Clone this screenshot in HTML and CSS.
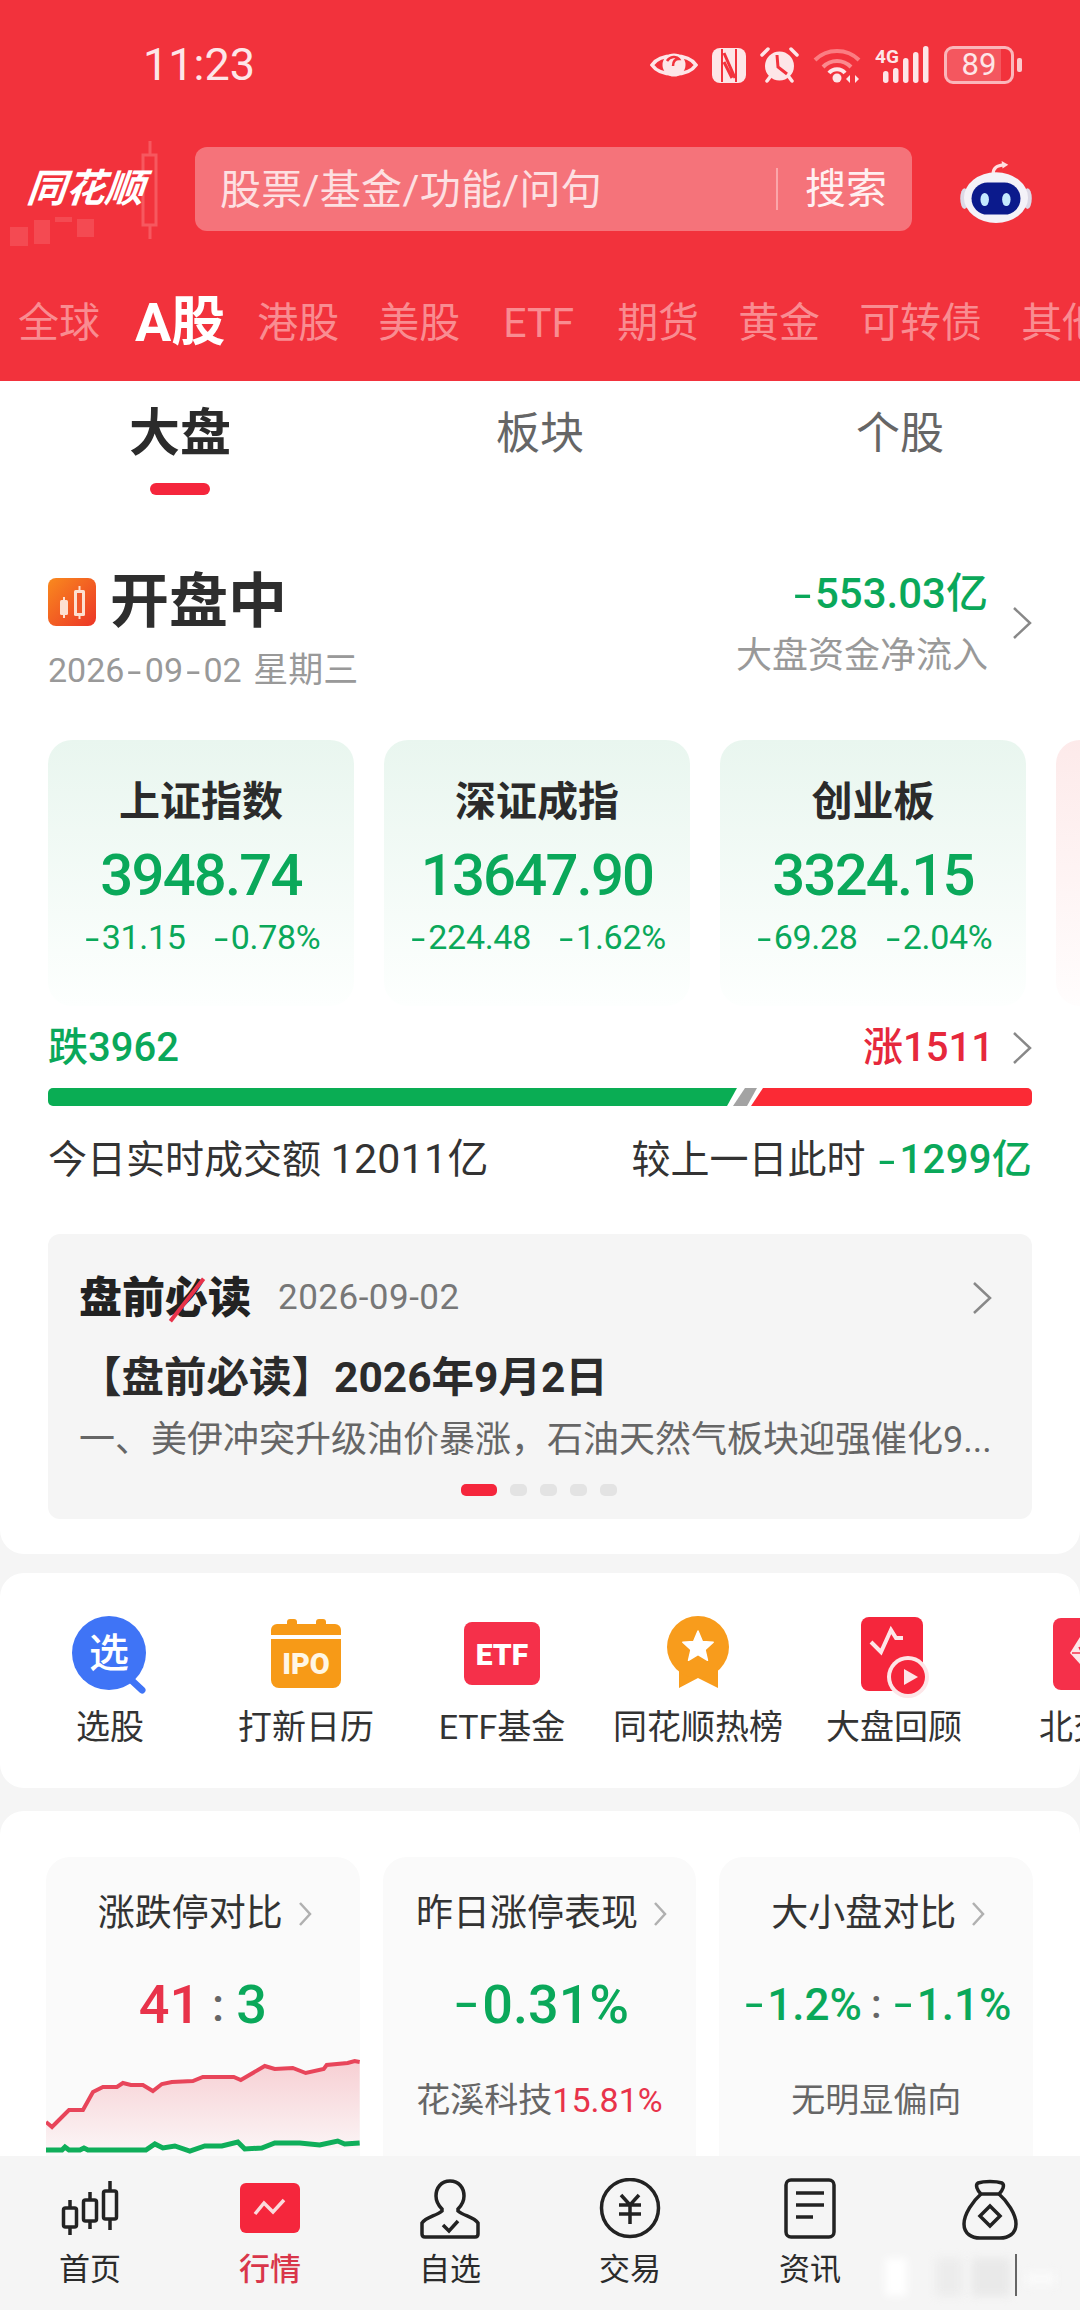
FILE: index.html
```html
<!DOCTYPE html>
<html lang="zh-CN">
<head>
<meta charset="utf-8">
<title>行情</title>
<link rel="stylesheet" href="styles.css">
</head>
<body>
<div class="page">
  <header class="header">
    <div class="status">
      <span class="time">11:23</span>
      <div class="status-icons">
        <svg class="si-eye" viewBox="0 0 48 32"><path d="M2 16C10 4 38 4 46 16C38 28 10 28 2 16Z" fill="none" stroke="#fde6e8" stroke-width="3.5"/><circle cx="24" cy="16" r="11.5" fill="#fde6e8"/><path d="M17 12C20 7 27 7 29 10C25 10 23 13 23 17" fill="none" stroke="#f2323c" stroke-width="2.5"/></svg>
        <svg class="si-nfc" viewBox="0 0 34 35"><rect width="34" height="35" rx="8" fill="#fde6e8"/><path d="M10 1V34M24 1V34" stroke="#f2323c" stroke-width="2"/><path d="M12 5L23 30M12 14L20 30" stroke="#f2323c" stroke-width="3"/></svg>
        <svg class="si-alarm" viewBox="0 0 39 38"><circle cx="19.500" cy="20" r="14.500" fill="#fde6e8"/><path d="M17 9L18 21L27 28" fill="none" stroke="#f2323c" stroke-width="3"/><path d="M2 9L8 3M37 9L31 3M7 35L10 31M32 35L29 31" stroke="#fde6e8" stroke-width="3.500" stroke-linecap="round"/></svg>
        <svg class="si-wifi" viewBox="0 0 48 36"><path d="M2 13C14 1 34 1 46 13" fill="none" stroke="#fb7d82" stroke-width="4"/><path d="M10 20C18 12 30 12 38 20" fill="none" stroke="#fb8a8e" stroke-width="4"/><path d="M16 26C20 21 28 21 32 26" fill="none" stroke="#fde6e8" stroke-width="4"/><circle cx="24" cy="31" r="4.500" fill="#fde6e8"/><path d="M37 28L33 32L37 36ZM42 28L46 32L42 36Z" fill="#fde6e8"/></svg>
        <svg class="si-signal" viewBox="0 0 55 38"><text class="si-4g" x="0" y="17">4G</text><g fill="#fde6e8"><rect x="8" y="25" width="5.500" height="12" rx="2.700"/><rect x="18" y="22" width="5.500" height="15" rx="2.700"/><rect x="28" y="12" width="5.500" height="25" rx="2.700"/><rect x="38" y="6" width="5.500" height="31" rx="2.700"/><rect x="48" y="0" width="5.500" height="37" rx="2.700"/></g></svg>
        <div class="battery"><div class="battery-body"><span class="battery-fill"></span><span class="battery-num">89</span></div><span class="battery-nub"></span></div>
      </div>
    </div>
    <div class="search-row">
      <div class="logo">
        <svg class="logo-bg" viewBox="0 0 170 110"><g fill="none" stroke="#f6585f" stroke-width="3"><rect x="143" y="22" width="13" height="70"/><path d="M150 8V22M150 92V106"/></g><g fill="#f44a52"><rect x="10" y="94" width="18" height="19"/><rect x="34" y="87" width="16" height="24"/><rect x="55" y="84" width="17" height="5"/><rect x="77" y="86" width="17" height="18"/></g></svg>
        <span class="logo-text">同花顺</span>
      </div>
      <div class="search">
        <span class="search-hint">股票/基金/功能/问句</span>
        <span class="search-btn">搜索</span>
      </div>
      <svg class="robot" viewBox="0 0 76 68"><path d="M35 15C35 8 39 6 47 5" fill="none" stroke="#ffdfe1" stroke-width="3.500"/><path d="M44 1L51 5L45 9Z" fill="#ffdfe1"/><ellipse cx="4.500" cy="41" rx="4.500" ry="11" fill="#dcd9e6"/><ellipse cx="71.500" cy="41" rx="4.500" ry="11" fill="#dcd9e6"/><ellipse cx="38" cy="40" rx="34" ry="27" fill="#f4f2f8"/><rect x="12" y="24" width="52" height="34" rx="17" fill="#0b1a8c"/><ellipse cx="26" cy="42" rx="4.500" ry="7" fill="#c4e9ff"/><ellipse cx="49" cy="42" rx="4.500" ry="7" fill="#c4e9ff"/></svg>
    </div>
    <nav class="market-tabs">
      <span class="mt">全球</span>
      <span class="mt mt-on">A股</span>
      <span class="mt">港股</span>
      <span class="mt">美股</span>
      <span class="mt mt-etf">ETF</span>
      <span class="mt">期货</span>
      <span class="mt">黄金</span>
      <span class="mt">可转债</span>
      <span class="mt">其他</span>
    </nav>
  </header>

  <main class="content">
    <section class="panel panel-main">
      <div class="subtabs">
        <div class="subtab subtab-on">大盘<i class="subtab-line"></i></div>
        <div class="subtab">板块</div>
        <div class="subtab">个股</div>
      </div>

      <div class="overview">
        <div class="overview-left">
          <div class="state">
            <svg class="state-icon" viewBox="0 0 48 48"><defs><linearGradient id="og" x1="0" y1="0" x2="1" y2="1"><stop offset="0" stop-color="#f98a1e"/><stop offset="1" stop-color="#ec3527"/></linearGradient></defs><rect width="48" height="48" rx="8" fill="url(#og)"/><g fill="#fde0d0"><rect x="12" y="22" width="8" height="15" rx="1.500"/><rect x="15" y="19" width="2" height="21"/><rect x="26" y="12" width="11" height="26" rx="1.500"/><rect x="30.500" y="8" width="2" height="33"/></g><rect x="29" y="15" width="5" height="20" fill="#f0592a"/></svg>
            <span class="state-text">开盘中</span>
          </div>
          <div class="state-date">2026<span class="dash">-</span>09<span class="dash">-</span>02 <span class="state-week">星期三</span></div>
        </div>
        <div class="overview-right">
          <div class="flow">
            <div class="flow-num up-green"><span class="dash">-</span>553.03亿</div>
            <div class="flow-label">大盘资金净流入</div>
          </div>
          <svg class="chev" viewBox="0 0 20 32"><path d="M2 1L18 16L2 31" fill="none" stroke="#888" stroke-width="2.500"/></svg>
        </div>
      </div>

      <div class="indices">
        <article class="index">
          <h3 class="index-name">上证指数</h3>
          <div class="index-val">3948.74</div>
          <div class="index-sub"><span><span class="dash">-</span>31.15</span><span><span class="dash">-</span>0.78%</span></div>
        </article>
        <article class="index">
          <h3 class="index-name">深证成指</h3>
          <div class="index-val">13647.90</div>
          <div class="index-sub"><span><span class="dash">-</span>224.48</span><span><span class="dash">-</span>1.62%</span></div>
        </article>
        <article class="index">
          <h3 class="index-name">创业板</h3>
          <div class="index-val">3324.15</div>
          <div class="index-sub"><span><span class="dash">-</span>69.28</span><span><span class="dash">-</span>2.04%</span></div>
        </article>
        <article class="index index-red"></article>
      </div>

      <div class="breadth">
        <span class="breadth-down">跌3962</span>
        <div class="breadth-right">
          <span class="breadth-up">涨1511</span>
          <svg class="chev" viewBox="0 0 20 32"><path d="M2 1L18 16L2 31" fill="none" stroke="#888" stroke-width="2.500"/></svg>
        </div>
      </div>
      <svg class="bar" viewBox="0 0 984 18"><path d="M5 0H689L679 18H5A5 5 0 0 1 0 13V5A5 5 0 0 1 5 0Z" fill="#0aad54"/><path d="M697 0H709L699 18H685Z" fill="#a3a3a3"/><path d="M715 0H979A5 5 0 0 1 984 5V13A5 5 0 0 1 979 18H703Z" fill="#fb2a35"/></svg>
      <div class="volume">
        <span class="volume-item">今日实时成交额 <b class="volume-num">12011亿</b></span>
        <span class="volume-item">较上一日此时 <b class="volume-num volume-delta up-green"><span class="dash">-</span>1299亿</b></span>
      </div>

      <div class="brief">
        <div class="brief-head">
          <span class="brief-logo">盘前<span class="brief-bi">必</span>读</span>
          <span class="brief-date">2026-09-02</span>
          <svg class="chev brief-chev" viewBox="0 0 20 32"><path d="M2 1L18 16L2 31" fill="none" stroke="#888" stroke-width="2.500"/></svg>
        </div>
        <div class="brief-title">【盘前必读】2026年9月2日</div>
        <div class="brief-desc">一、美伊冲突升级油价暴涨&#65292;石油天然气板块迎强催化9...</div>
        <div class="dots"><i class="dot dot-on"></i><i class="dot"></i><i class="dot"></i><i class="dot"></i><i class="dot"></i></div>
      </div>
    </section>

    <section class="panel panel-tools">
      <div class="tool">
        <svg class="tool-icon" viewBox="0 0 80 80"><path d="M58 62L72 75" stroke="#3f74f6" stroke-width="7" stroke-linecap="round"/><circle cx="39" cy="38" r="37" fill="#3f74f6"/><text class="ti-cn" x="39" y="52">选</text></svg>
        <span class="tool-name">选股</span>
      </div>
      <div class="tool">
        <svg class="tool-icon" viewBox="0 0 80 80"><g fill="#f79a17"><rect x="21" y="4" width="10" height="8" rx="3"/><rect x="50" y="4" width="10" height="8" rx="3"/><path d="M5 20V15A6 6 0 0 1 11 9H69A6 6 0 0 1 75 15V20Z"/><path d="M5 24H75V65A8 8 0 0 1 67 73H13A8 8 0 0 1 5 65Z"/></g><text class="ti-en ti-ipo" x="40" y="59">IPO</text></svg>
        <span class="tool-name">打新日历</span>
      </div>
      <div class="tool">
        <svg class="tool-icon" viewBox="0 0 80 80"><rect x="2" y="7" width="76" height="63" rx="8" fill="#f5304a"/><text class="ti-en ti-etf" x="40" y="50">ETF</text></svg>
        <span class="tool-name">ETF基金</span>
      </div>
      <div class="tool">
        <svg class="tool-icon" viewBox="0 0 80 80"><path d="M21 50H60V73L40 63L21 73Z" fill="#f89c1c"/><circle cx="40" cy="32" r="31" fill="#f89c1c"/><path d="M40 16L44.400 26.500L55.200 27.300L47 34.600L49.500 45.300L40 39.500L30.500 45.300L33 34.600L24.800 27.300L35.600 26.500Z" fill="#fff" stroke="#fff" stroke-width="1.500" stroke-linejoin="round"/></svg>
        <span class="tool-name">同花顺热榜</span>
      </div>
      <div class="tool">
        <svg class="tool-icon" viewBox="0 0 80 80"><rect x="7" y="2" width="62" height="74" rx="8" fill="#f5263c"/><path d="M17 27L27 37L37 15L42 23H49" fill="none" stroke="#fde6e8" stroke-width="4"/><circle cx="54" cy="62" r="21" fill="#fde6e8"/><circle cx="54" cy="62" r="17" fill="#f5263c"/><path d="M50 54L64 62L50 70Z" fill="#fde6e8"/></svg>
        <span class="tool-name">大盘回顾</span>
      </div>
      <div class="tool">
        <svg class="tool-icon" viewBox="0 0 80 80"><rect x="3" y="3" width="74" height="72" rx="8" fill="#f5304a"/><path d="M20 38L30 22H50L60 38L40 60Z" fill="#fde6e8"/><path d="M22 38H32L29 32" fill="none" stroke="#f5304a" stroke-width="1.500"/></svg>
        <span class="tool-name">北交所</span>
      </div>
    </section>

    <section class="panel panel-stats">
      <article class="stat">
        <div class="stat-title">涨跌停对比<svg class="chev-s" viewBox="0 0 14 24"><path d="M2 1L12 12L2 23" fill="none" stroke="#b0b0b0" stroke-width="2.500"/></svg></div>
        <div class="stat-val stat-val-ratio"><span class="red">41</span><span class="colon">:</span><span class="up-green">3</span></div>
        <svg class="spark" viewBox="46 2050 314 110" preserveAspectRatio="none"><defs><linearGradient id="rg" x1="0" y1="0" x2="0" y2="1"><stop offset="0" stop-color="#f7cfd3"/><stop offset="1" stop-color="#fbf4f5"/></linearGradient></defs><path d="M46 2122L52 2127L62 2117L69 2110L83 2110L93 2092L103 2087L117 2087L123 2083L131 2085L143 2085L153 2091L162 2084L172 2082L193 2081L203 2077L234 2077L241 2080L265 2066L275 2069L293 2068L306 2073L324 2069L327 2065L348 2063L355 2061L360 2062V2148H46Z" fill="url(#rg)"/><path d="M46 2122L52 2127L62 2117L69 2110L83 2110L93 2092L103 2087L117 2087L123 2083L131 2085L143 2085L153 2091L162 2084L172 2082L193 2081L203 2077L234 2077L241 2080L265 2066L275 2069L293 2068L306 2073L324 2069L327 2065L348 2063L355 2061L360 2062" fill="none" stroke="#e8455a" stroke-width="4"/><path d="M46 2150H62L65 2147L69 2150L80 2150L84 2148L88 2150H146L155 2144L163 2148L175 2146L190 2151L205 2146L222 2146L238 2142L245 2149L262 2148L275 2143L300 2143L320 2145L338 2141L345 2144L360 2143" fill="none" stroke="#0fae5a" stroke-width="5"/></svg>
      </article>
      <article class="stat">
        <div class="stat-title">昨日涨停表现<svg class="chev-s" viewBox="0 0 14 24"><path d="M2 1L12 12L2 23" fill="none" stroke="#b0b0b0" stroke-width="2.500"/></svg></div>
        <div class="stat-val up-green"><span class="dash">-</span>0.31%</div>
        <div class="stat-sub">花溪科技<span class="red">15.81%</span></div>
      </article>
      <article class="stat">
        <div class="stat-title">大小盘对比<svg class="chev-s" viewBox="0 0 14 24"><path d="M2 1L12 12L2 23" fill="none" stroke="#b0b0b0" stroke-width="2.500"/></svg></div>
        <div class="stat-val stat-val-small up-green"><span class="dash">-</span>1.2%<span class="colon colon-small">:</span><span class="dash">-</span>1.1%</div>
        <div class="stat-sub">无明显偏向</div>
      </article>
    </section>
  </main>

  <nav class="tabbar">
    <div class="tab">
      <svg class="tab-icon" viewBox="0 0 64 64"><g fill="none" stroke="#222" stroke-width="3.500"><rect x="5.500" y="30" width="13" height="19" rx="2"/><path d="M12 22V30M12 49V57"/><rect x="25.500" y="22" width="13" height="21" rx="2"/><path d="M32 14V22M32 43V51"/><rect x="45.500" y="13" width="13" height="28" rx="2"/><path d="M52 3V13M52 41V52"/></g></svg>
      <span class="tab-name">首页</span>
    </div>
    <div class="tab tab-on">
      <svg class="tab-icon" viewBox="0 0 64 64"><rect x="2" y="5" width="60" height="50" rx="6" fill="#f5263c"/><path d="M17 36L26 25L35 34L46 22" fill="none" stroke="#fbd9dc" stroke-width="3.500"/></svg>
      <span class="tab-name">行情</span>
    </div>
    <div class="tab">
      <svg class="tab-icon" viewBox="0 0 64 64"><path d="M32 3C23 3 18 10 18 18C18 24 21 28 24 31V33C18 38 8 39 4 45V56C4 58 5 59 7 59H57C59 59 60 58 60 56V45C56 39 46 38 40 33V31C43 28 46 24 46 18C46 10 41 3 32 3Z" fill="none" stroke="#222" stroke-width="3.500"/><path d="M25 47L31 53L40 43" fill="none" stroke="#222" stroke-width="3.500"/></svg>
      <span class="tab-name">自选</span>
    </div>
    <div class="tab">
      <svg class="tab-icon" viewBox="0 0 64 64"><circle cx="32" cy="30" r="28.500" fill="none" stroke="#222" stroke-width="3.500"/><path d="M23 17L32 27L41 17M21 27H43M21 36H43M32 27V46" fill="none" stroke="#222" stroke-width="3.500"/></svg>
      <span class="tab-name">交易</span>
    </div>
    <div class="tab">
      <svg class="tab-icon" viewBox="0 0 64 64"><rect x="8" y="2" width="48" height="57" rx="5" fill="none" stroke="#222" stroke-width="3.500"/><path d="M18 15H46M18 27H46M18 39H35" fill="none" stroke="#222" stroke-width="3.500"/></svg>
      <span class="tab-name">资讯</span>
    </div>
    <div class="tab">
      <svg class="tab-icon" viewBox="0 0 64 64"><path d="M20 5C26 3 38 3 44 5C47 7 45 12 41 16H23C19 12 17 7 20 5Z" fill="none" stroke="#222" stroke-width="3.500"/><path d="M23 16C15 23 6 36 6 46C6 56 14 60 22 60H42C50 60 58 56 58 46C58 36 49 23 41 16" fill="none" stroke="#222" stroke-width="3.500"/><path d="M32 28L42 38L32 48L22 38Z" fill="none" stroke="#222" stroke-width="3.500"/></svg>
      <span class="tab-name tab-name-hidden"></span>
    </div>
    <div class="smear" aria-hidden="true"><i class="sm sm-a"></i><i class="sm sm-b"></i><i class="sm sm-c"></i><i class="sm sm-d"></i><i class="sm-line"></i></div>
  </nav>
</div>
</body>
</html>
```
FILE: styles.css
```css
* { box-sizing: border-box; }
html, body { margin: 0; padding: 0; }
body {
  width: 1080px;
  height: 2310px;
  overflow: hidden;
  font-family: Roboto, "Noto Sans CJK SC", sans-serif;
  color: #333;
  background: #f5f5f5;
}
.page { width: 1080px; height: 2310px; display: flex; flex-direction: column; }
.dash { display: inline-block; font-family: "Liberation Mono", Roboto, monospace; line-height: 0; transform: scaleX(1.3); }
.up-green { color: #0aa85a; }
.red { color: #e8334a; }

/* header */
.header { height: 381px; flex: none; background: #f2323c; overflow: hidden; }
.status { height: 130px; display: flex; align-items: center; justify-content: space-between; padding: 0 58px 0 143px; }
.time { font-size: 45px; color: #fde6e8; line-height: 50px; }
.status-icons { display: flex; align-items: center; gap: 14px; }
.si-eye { width: 48px; height: 32px; }
.si-nfc { width: 34px; height: 35px; }
.si-alarm { width: 39px; height: 38px; }
.si-wifi { width: 48px; height: 36px; }
.si-signal { width: 55px; height: 38px; }
.si-4g { font: 700 19px Roboto, sans-serif; fill: #fde6e8; }
.battery { display: flex; align-items: center; gap: 3px; }
.battery-body { position: relative; width: 70px; height: 38px; border: 3px solid #fbb6ba; border-radius: 9px; display: flex; align-items: center; justify-content: center; overflow: hidden; }
.battery-fill { position: absolute; left: 0; top: 0; bottom: 0; width: 84%; background: rgba(255,255,255,.18); }
.battery-num { position: relative; font-size: 31px; line-height: 32px; color: #fde6e8; }
.battery-nub { width: 5px; height: 14px; background: #fbc9cc; border-radius: 2px; }

.search-row { height: 84px; margin-top: 17px; display: flex; align-items: center; }
.logo { position: relative; width: 195px; height: 84px; flex: none; display: flex; align-items: center; padding-left: 27px; }
.logo-bg { position: absolute; left: 0; top: -14px; width: 170px; height: 110px; overflow: visible; }
.logo-text { position: relative; font-size: 39px; font-weight: 700; font-style: italic; color: #fff; line-height: 44px; transform: skewX(-6deg); }
.search { width: 717px; height: 84px; flex: none; background: #f5737a; border-radius: 12px; display: flex; align-items: center; justify-content: space-between; padding: 0 25px; color: #fde0e2; font-size: 41px; }
.search-hint { line-height: 50px; letter-spacing: .3px; position: relative; top: 1px; }
.search-btn { line-height: 42px; padding-left: 27px; border-left: 2px solid #fba6aa; color: #fff0f1; }
.robot { width: 72px; height: 64px; margin-left: 48px; margin-top: 6px; flex: none; }

.market-tabs { margin-top: 62px; height: 60px; display: flex; align-items: center; gap: 39px; padding-left: 18px; white-space: nowrap; font-size: 41px; color: #f98c91; }
.mt { line-height: 60px; flex: none; }
.mt-on { font-size: 54px; font-weight: 700; color: #fff; margin: 0 -7px 0 -4px; }
.mt-etf { margin: 0 4px; }

/* content */
.content { flex: 1; min-height: 0; overflow: hidden; }
.panel { background: #fff; overflow: hidden; }
.panel-main { padding: 0 48px 35px; border-radius: 0 0 24px 24px; }

.subtabs { display: flex; margin: 0 -48px; padding-top: 23px; height: 114px; }
.subtab { flex: 1; display: flex; flex-direction: column; align-items: center; font-size: 44px; line-height: 60px; color: #666; }
.subtab-on { font-size: 51px; font-weight: 700; color: #2b2b2b; }
.subtab-line { display: block; width: 60px; height: 12px; margin-top: 19px; border-radius: 6px; background: #f5263c; }

.overview { display: flex; justify-content: space-between; padding-top: 74px; }
.overview-left { padding-top: 3px; }
.state { display: flex; align-items: center; gap: 14px; height: 60px; }
.state-icon { width: 48px; height: 48px; flex: none; }
.state-text { font-size: 59px; font-weight: 700; color: #2e2e2e; line-height: 60px; }
.state-date { margin-top: 18px; font-size: 34px; line-height: 40px; color: #999; }
.state-week { font-size: 35px; margin-left: 3px; line-height: 0; }
.overview-right { display: flex; align-items: center; gap: 24px; height: 107px; }
.flow { text-align: right; }
.flow-num { font-size: 42px; font-weight: 500; line-height: 44px; padding-top: 3px; }
.flow-label { margin-top: 20px; font-size: 36px; line-height: 40px; color: #999; }
.chev { width: 20px; height: 32px; flex: none; }

.indices { display: flex; gap: 30px; margin-top: 50px; }
.index { width: 306px; height: 266px; flex: none; border-radius: 24px; padding-top: 37px; text-align: center; background: linear-gradient(#e9f6ef, #fdfffe); }
.index-red { background: linear-gradient(#fdeaea, #fffdfd); }
.index-name { margin: 0; font-size: 41px; font-weight: 700; line-height: 50px; color: #2b2b2b; }
.index-val { margin-top: 15px; font-size: 58px; font-weight: 500; line-height: 66px; letter-spacing: -1.8px; color: #0aa85a; }
.index-sub { margin-top: 9px; display: flex; justify-content: center; gap: 25px; font-size: 34px; line-height: 40px; letter-spacing: -.3px; color: #0aa85a; }

.breadth { margin-top: 20px; height: 44px; display: flex; align-items: center; justify-content: space-between; font-size: 40px; font-weight: 500; line-height: 44px; }
.breadth-down { color: #0aa85a; }
.breadth-up { color: #e6283c; }
.breadth-right { display: flex; align-items: center; gap: 18px; }
.bar { display: block; width: 984px; height: 18px; margin-top: 18px; }
.volume { margin-top: 29px; height: 50px; display: flex; justify-content: space-between; font-size: 39px; line-height: 50px; color: #333; }
.volume-num { font-size: 41px; font-weight: 400; letter-spacing: .3px; line-height: 0; }
.volume-delta { font-weight: 500; font-size: 40px; }

.brief { margin-top: 49px; height: 285px; border-radius: 12px; background: #f5f5f5; padding: 39px 34px 0 31px; }
.brief-head { display: flex; align-items: center; height: 50px; }
.brief-logo { position: relative; font-size: 43px; font-weight: 900; line-height: 50px; color: #222; }
.brief-bi { position: relative; display: inline-block; }
.brief-bi::after { content: ""; position: absolute; left: 20px; top: 0; width: 4px; height: 54px; background: #e8334a; transform: rotate(38deg); }
.brief-date { margin-left: 27px; font-size: 35px; line-height: 50px; letter-spacing: .5px; color: #777; }
.brief-chev { margin-left: auto; margin-right: 6px; }
.brief-title { margin-top: 30px; height: 50px; font-size: 42.5px; font-weight: 700; line-height: 50px; color: #2b2b2b; }
.brief-desc { margin-top: 12px; font-size: 36px; line-height: 50px; color: #666; white-space: nowrap; overflow: hidden; }
.dots { margin-top: 19px; display: flex; justify-content: center; gap: 13px; }
.dot { display: block; width: 17px; height: 12px; border-radius: 5px; background: #e3e3e3; }
.dot-on { width: 36px; background: #f5263c; }

.panel-tools { margin-top: 19px; height: 215px; border-radius: 24px; display: flex; padding: 42px 0 0 12px; }
.tool { width: 196px; flex: none; display: flex; flex-direction: column; align-items: center; }
.tool-icon { width: 80px; height: 80px; flex: none; overflow: visible; }
.tool-name { margin-top: 7px; font-size: 34px; line-height: 50px; color: #333; white-space: nowrap; }
.ti-cn { font: 500 40px "Noto Sans CJK SC", sans-serif; fill: #fff; text-anchor: middle; }
.ti-en { font-family: Roboto, sans-serif; font-weight: 900; text-anchor: middle; }
.ti-ipo { font-size: 29px; fill: #fff6e4; }
.ti-etf { font-size: 30px; fill: #fff; }

.panel-stats { margin-top: 23px; height: 500px; border-radius: 24px 24px 0 0; padding: 46px 47px 0 46px; display: flex; gap: 23px; }
.stat { flex: 1; height: 400px; border-radius: 24px; background: #fafafa; padding-top: 32px; text-align: center; overflow: hidden; }
.stat-title { display: flex; align-items: center; justify-content: center; gap: 15px; font-size: 37px; line-height: 50px; color: #333; padding-left: 4px; }
.chev-s { width: 14px; height: 24px; flex: none; }
.stat-val { margin-top: 31px; height: 70px; display: flex; align-items: center; justify-content: center; font-size: 54px; font-weight: 500; line-height: 70px; }
.stat-val-small { font-size: 44px; }
.colon { margin: 0 12px; color: #666; font-size: 46px; }
.colon-small { font-size: 40px; margin: 0 9px; }
.stat-sub { margin-top: 35px; height: 50px; font-size: 34px; line-height: 50px; color: #666; }
.spark { display: block; width: 100%; height: 110px; margin-top: 10px; }

/* tab bar */
.tabbar { position: relative; height: 154px; flex: none; display: flex; background: #f5f5f5; }
.tab { flex: 1; display: flex; flex-direction: column; align-items: center; padding-top: 22px; }
.tab-icon { width: 64px; height: 64px; flex: none; }
.tab-name { margin-top: 8px; font-size: 31px; line-height: 40px; color: #2b2b2b; }
.tab-on .tab-name { color: #d9364a; font-weight: 500; }
.smear { position: absolute; left: 880px; top: 98px; width: 190px; height: 46px; }
.sm { position: absolute; top: 4px; height: 38px; background: #fff; filter: blur(4px); }
.sm-a { left: 5px; width: 22px; }
.sm-b { left: 56px; width: 26px; background: #ececec; }
.sm-c { left: 92px; width: 38px; background: #e9e9e9; }
.sm-d { left: 146px; width: 30px; height: 14px; top: 18px; background: #fafafa; }
.sm-line { position: absolute; left: 135px; top: 0; width: 2px; height: 42px; background: #666; }
```
